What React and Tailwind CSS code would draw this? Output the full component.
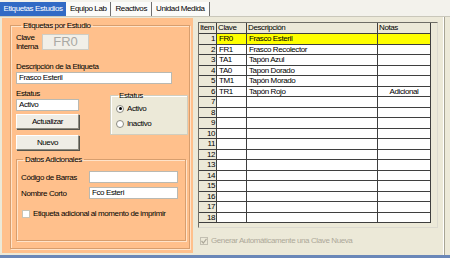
import React from "react";

const rows = [
  { clave: "FR0", desc: "Frasco Esteril", notas: "" },
  { clave: "FR1", desc: "Frasco Recolector", notas: "" },
  { clave: "TA1", desc: "Tapón Azul", notas: "" },
  { clave: "TA0", desc: "Tapon Dorado", notas: "" },
  { clave: "TM1", desc: "Tapón Morado", notas: "" },
  { clave: "TR1", desc: "Tapón Rojo", notas: "Adicional" },
];
while (rows.length < 18) rows.push({ clave: "", desc: "", notas: "" });

function Radio({ checked, label }) {
  return (
    <div className="flex items-center h-[9px]">
      <span className="w-[8px] h-[8px] rounded-full bg-white border border-[#8a8a80] flex items-center justify-center">
        {checked && <span className="w-[3px] h-[3px] rounded-full bg-black" />}
      </span>
      <span className="ml-[3px] leading-[9px]">{label}</span>
    </div>
  );
}

function Button({ children }) {
  return (
    <button className="w-[63px] h-[15px] bg-[#efede5] border border-t-white border-l-white border-r-[#8d8b80] border-b-[#8d8b80] shadow-[1px_1px_0_#55544c] flex items-center justify-center leading-[9px]">
      {children}
    </button>
  );
}

export default function App() {
  return (
    <div className="w-[450px] h-[258px] overflow-hidden bg-[#ece9d8] flex flex-col font-['Liberation_Sans',Arial,sans-serif] text-[8px] tracking-[-0.4px] text-black">
      {/* TABS */}
      <div className="h-[17px] flex bg-[#f3f2ec] border-b border-[#c9c7ba]">
        <div className="mt-[2px] w-[66px] h-[14px] bg-[#316ac5] text-white flex items-center justify-center">
          Etiquetas Estudios
        </div>
        {["Equipo Lab", "Reactivos", "Unidad Medida"].map((t) => (
          <div
            key={t}
            className="mt-[2px] h-[14px] px-[4px] bg-[#fbfbf9] border-r border-[#6f6f6f] flex items-center"
          >
            {t}
          </div>
        ))}
      </div>

      {/* CONTENT */}
      <div className="flex-1 flex items-start mr-[5px] border-r border-[#a7a595] shadow-[inset_-1px_0_0_white]">
        {/* LEFT PANEL */}
        <div className="ml-[2px] mt-[1px] w-[191px] h-[235px] bg-[#ffc08c] pt-[3px] pl-[8px]">
          <fieldset className="w-[180px] h-[228px] border border-[#d79e6e] shadow-[inset_1px_1px_0_#ffe3c9,1px_1px_0_#ffe3c9] pl-[5px]">
            <legend className="ml-[5px] px-[2px] leading-[9px]">Etiquetas por Estudio</legend>

            {/* CLAVE INTERNA */}
            <div className="flex items-center mt-[3px]">
              <div className="w-[26px] leading-[9px]">
                Clave
                <br />
                Interna
              </div>
              <div className="w-[47px] h-[16px] bg-[#f1efe8] border border-[#cfcdc4] text-[#a9a9a4] text-[13px] tracking-normal leading-[14px] flex items-center justify-center">
                FR0
              </div>
            </div>

            {/* DESCRIPCION */}
            <div className="mt-[11px] leading-[9px]">Descripción de la Etiqueta</div>
            <div className="mt-[1px] w-[156px] h-[12px] bg-white border border-[#b9b9b2] pl-[2px] leading-[10px]">
              Frasco Esteril
            </div>

            {/* ESTATUS */}
            <div className="flex mt-[5px]">
              <div className="w-[63px] flex flex-col">
                <div className="leading-[9px]">Estatus</div>
                <div className="mt-[1px] h-[12px] bg-white border border-[#b9b9b2] pl-[2px] leading-[10px]">
                  Activo
                </div>
                <div className="mt-[3px]">
                  <Button>Actualizar</Button>
                </div>
                <div className="mt-[6px]">
                  <Button>Nuevo</Button>
                </div>
              </div>
              <fieldset className="ml-[31px] mt-[2px] w-[78px] h-[44px] bg-[#ece9d8] border border-[#d0cebf] shadow-[inset_1px_1px_0_white] pl-[5px]">
                <legend className="ml-[2px] px-[1px] leading-[9px]">Estatus</legend>
                <div className="mt-[4px]">
                  <Radio checked label="Activo" />
                </div>
                <div className="mt-[6px]">
                  <Radio label="Inactivo" />
                </div>
              </fieldset>
            </div>

            {/* DATOS ADICIONALES */}
            <fieldset className="mt-[5px] w-[170px] h-[86px] border border-[#d79e6e] shadow-[inset_1px_1px_0_#ffe3c9,1px_1px_0_#ffe3c9] pl-[4px]">
              <legend className="ml-[2px] px-[2px] leading-[9px]">Datos Adicionales</legend>
              <div className="flex items-center mt-[7px]">
                <div className="w-[68px] leading-[9px]">Código de Barras</div>
                <div className="w-[89px] h-[12px] bg-white border border-[#b9b9b2]" />
              </div>
              <div className="flex items-center mt-[4px]">
                <div className="w-[68px] leading-[9px]">Nombre Corto</div>
                <div className="w-[89px] h-[12px] bg-white border border-[#b9b9b2] pl-[2px] leading-[10px]">
                  Fco Esteri
                </div>
              </div>
              <div className="flex items-center mt-[10px] ml-[1px]">
                <span className="w-[8px] h-[8px] bg-white border border-[#c9c4b4]" />
                <span className="ml-[3px] leading-[9px]">
                  Etiqueta adicional al momento de imprimir
                </span>
              </div>
            </fieldset>
          </fieldset>
        </div>

        {/* RIGHT PANEL */}
        <div className="ml-[5px] mt-[5px] flex flex-col">
          <div className="w-[240px] h-[206px] border border-[#6e6d66] border-r-[#dcdad0] border-b-[#dcdad0] bg-[#ece9d8]">
            <div className="w-[232px]">
              {/* HEADER */}
              <div className="flex h-[11px] border-b border-[#3f3f3f] leading-[10px]">
                <div className="w-[18px] border-r border-[#3f3f3f] pl-[1px]">Item</div>
                <div className="w-[30px] border-r border-[#3f3f3f] pl-[1px]">Clave</div>
                <div className="w-[131px] border-r border-[#3f3f3f] pl-[1px]">Descripción</div>
                <div className="w-[53px] border-r border-[#3f3f3f] pl-[1px]">Notas</div>
              </div>
              {rows.map((r, i) => (
                <div
                  key={i}
                  className={
                    "flex border-b border-[#3f3f3f] " +
                    (i % 2 === 0 ? "h-[11px] leading-[10px]" : "h-[10px] leading-[9px]")
                  }
                >
                  <div className="w-[18px] border-r border-[#3f3f3f] text-right pr-[1px]">{i + 1}</div>
                  <div className={"w-[30px] border-r border-[#3f3f3f] pl-[2px] " + (i === 0 ? "bg-[#ffff00]" : "bg-white")}>
                    {r.clave}
                  </div>
                  <div className={"w-[131px] border-r border-[#3f3f3f] pl-[2px] " + (i === 0 ? "bg-[#ffff00]" : "bg-white")}>
                    {r.desc}
                  </div>
                  <div className={"w-[53px] border-r border-[#3f3f3f] text-center " + (i === 0 ? "bg-[#ffff00]" : "bg-white")}>
                    {r.notas}
                  </div>
                </div>
              ))}
            </div>
          </div>

          <div className="flex items-center mt-[8px] ml-[2px] text-[#aca899]">
            <span className="w-[8px] h-[8px] border border-[#c2bfb1] flex items-center justify-center">
              <svg width="6" height="6" viewBox="0 0 6 6">
                <path d="M0.5 3 L2.3 5 L5.5 0.8" fill="none" stroke="#aca899" strokeWidth="1.2" />
              </svg>
            </span>
            <span className="ml-[3px] leading-[9px]">Generar Automáticamente una Clave Nueva</span>
          </div>
        </div>
      </div>

      {/* BOTTOM STRIP */}
      <div className="h-[3px] bg-[#6a87b8]" />
    </div>
  );
}
